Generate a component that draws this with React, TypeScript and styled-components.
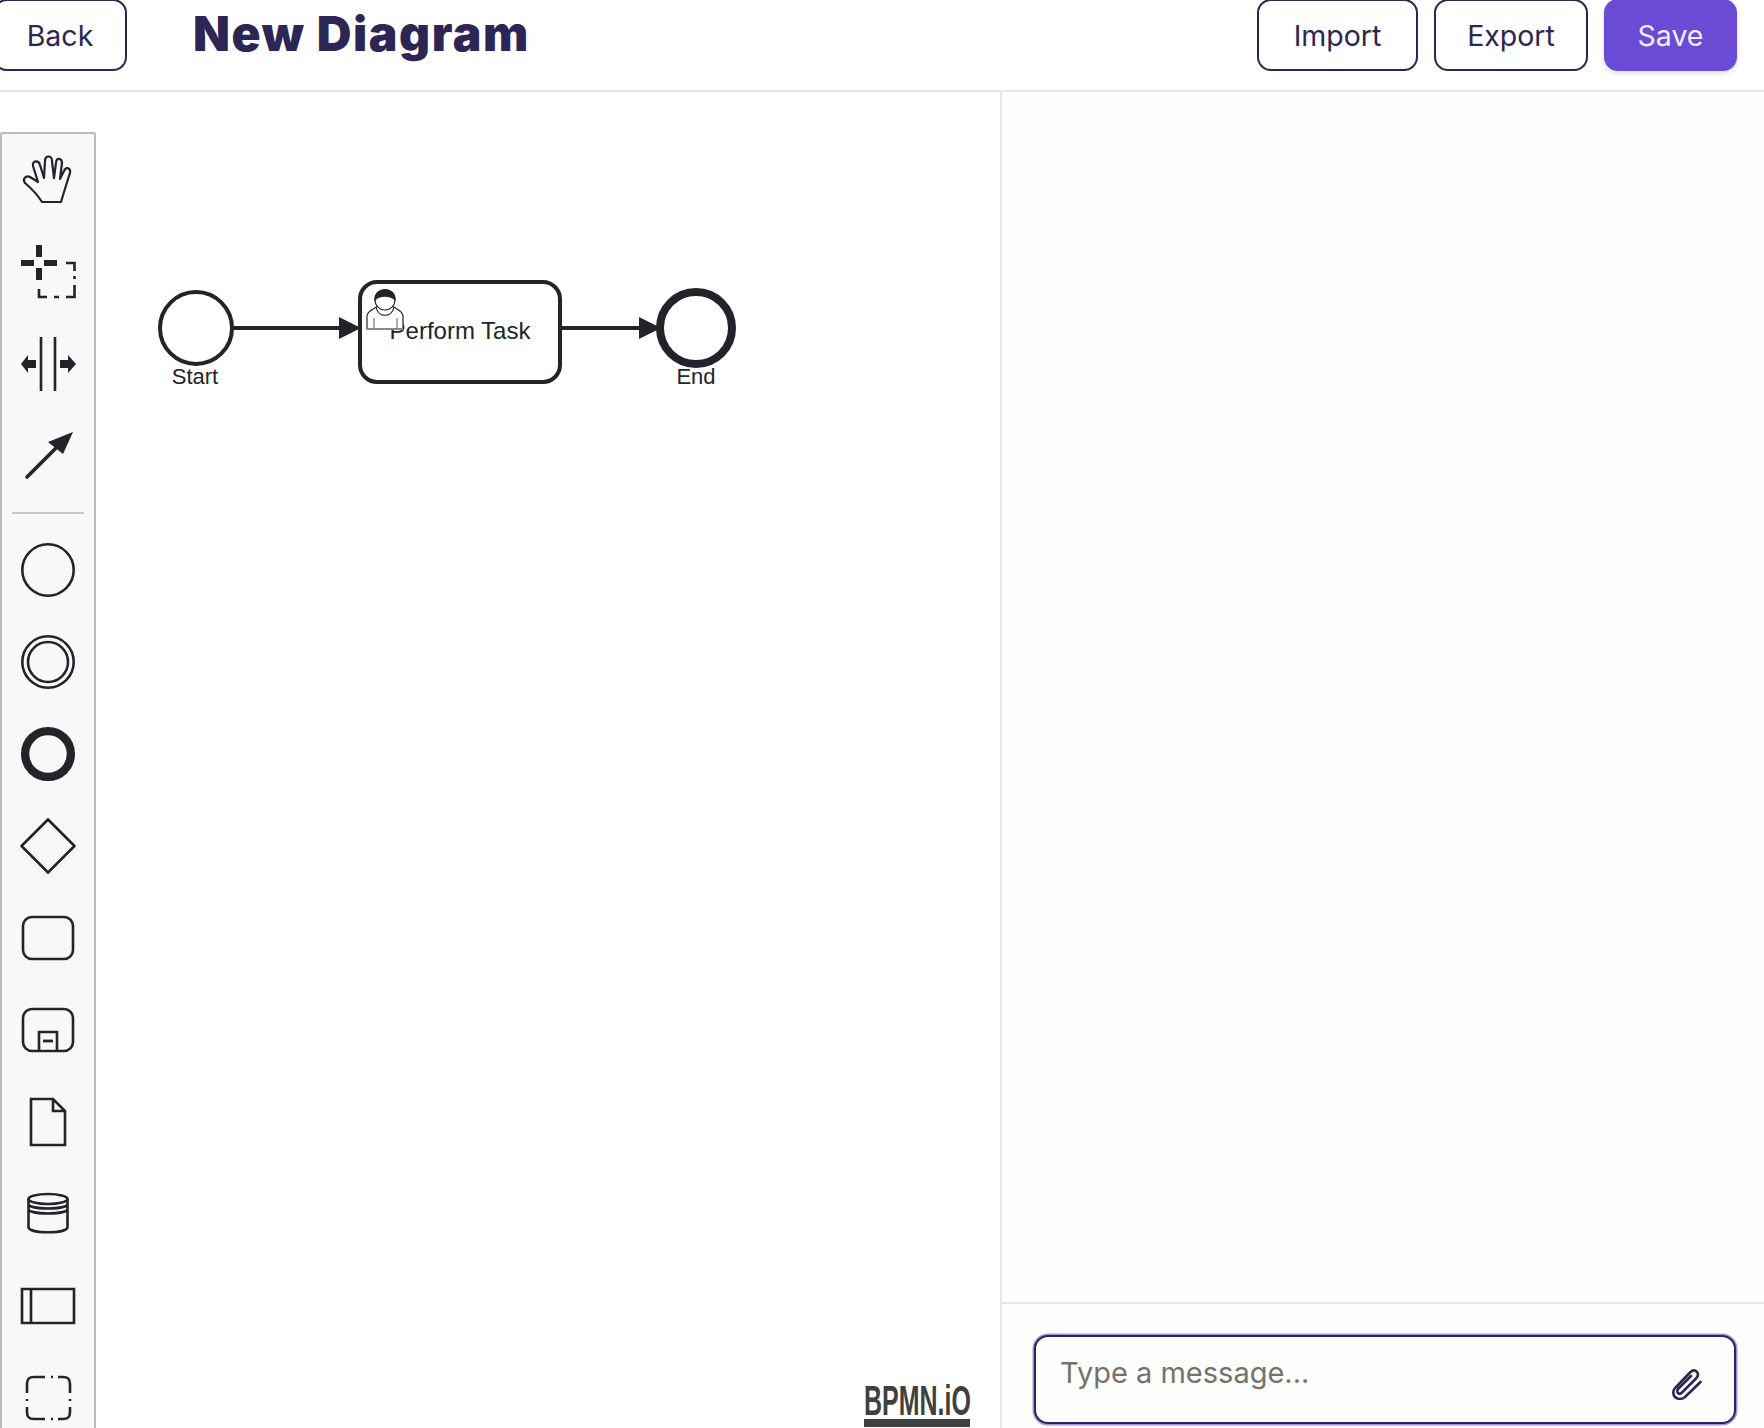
import React from "react";
import styled, { createGlobalStyle } from "styled-components";

const INK = "#22242a";
const NAVY = "#2d2654";

const GlobalStyle = createGlobalStyle`
  html, body {
    margin: 0;
    padding: 0;
    height: 100%;
    overflow: hidden;
    background: #ffffff;
  }
  #root {
    height: 100%;
  }
`;

const Page = styled.div`
  display: flex;
  flex-direction: column;
  width: 1764px;
  height: 1428px;
  overflow: hidden;
  font-family: Inter, "Open Sans", sans-serif;
  color: ${NAVY};
`;

const Header = styled.header`
  display: flex;
  align-items: flex-start;
  justify-content: space-between;
  flex: 0 0 92px;
  box-sizing: border-box;
  padding: 0 27px 0 0;
  border-bottom: 2px solid #e6e6e6;
`;

const HeaderSide = styled.div`
  display: flex;
  align-items: flex-start;
`;

const Button = styled.button<{ $width: number; $primary?: boolean }>`
  width: ${(p) => p.$width}px;
  height: 72px;
  margin-top: -1px;
  box-sizing: border-box;
  border: ${(p) => (p.$primary ? "none" : `2px solid ${NAVY}`)};
  border-radius: 14px;
  background: ${(p) => (p.$primary ? "#6a4bd6" : "#ffffff")};
  color: ${(p) => (p.$primary ? "#f1edff" : NAVY)};
  box-shadow: ${(p) => (p.$primary ? "0 2px 5px rgba(60, 40, 140, 0.18)" : "none")};
  font: 400 28.5px Inter, "Open Sans", sans-serif;
`;

const BackButton = styled(Button)`
  margin-left: -7px;
`;

const ActionButton = styled(Button)`
  margin-left: 16px;
`;

const Title = styled.h1`
  margin: 0 0 0 66px;
  padding-top: 3px;
  font-size: 48px;
  line-height: 62px;
  font-weight: 900;
  letter-spacing: 1.6px;
  color: ${NAVY};
`;

const Body = styled.div`
  display: flex;
  flex: 1;
  min-height: 0;
`;

const Canvas = styled.main`
  position: relative;
  flex: 0 0 1000px;
  overflow: hidden;
  background: #ffffff;
`;

const Palette = styled.nav`
  position: absolute;
  left: 0;
  top: 40px;
  display: flex;
  flex-direction: column;
  width: 96px;
  box-sizing: border-box;
  padding-top: 1px;
  border: 2px solid #b9bcc6;
  border-radius: 2px;
  background: #f8f8f8;
`;

const Tool = styled.div`
  display: flex;
  align-items: center;
  justify-content: center;
  flex: 0 0 92px;
  height: 92px;
`;

const Separator = styled.hr`
  width: 72px;
  margin: 9px auto 10px;
  border: none;
  border-top: 2px solid #c6c8cd;
`;

const DiagramSvg = styled.svg`
  position: absolute;
  left: 140px;
  top: 88px;
`;

const DiagramLabel = styled.text<{ $size: number }>`
  font-family: "Liberation Sans", Arial, sans-serif;
  font-size: ${(p) => p.$size}px;
  fill: ${INK};
  text-anchor: middle;
`;

const Watermark = styled.div`
  position: absolute;
  left: 864px;
  bottom: 1px;
  display: flex;
  flex-direction: column;
  width: 106px;
`;

const WatermarkText = styled.span`
  display: block;
  height: 34px;
  font: 700 42px/34px "Liberation Sans", Arial, sans-serif;
  color: #404040;
  white-space: nowrap;
  transform: scaleX(0.595);
  transform-origin: left center;
`;

const WatermarkBar = styled.span`
  display: block;
  height: 8px;
  margin-top: 1px;
  background: #404040;
`;

const ChatPanel = styled.aside`
  display: flex;
  flex-direction: column;
  flex: 1;
  border-left: 2px solid #e6e6e6;
  background: #fefefc;
`;

const Messages = styled.div`
  flex: 1;
`;

const Composer = styled.div`
  flex: 0 0 126px;
  box-sizing: border-box;
  padding: 31px 28px 0 32px;
  border-top: 2px solid #e6e6e6;
`;

const InputBox = styled.div`
  display: flex;
  justify-content: space-between;
  box-sizing: border-box;
  height: 89px;
  padding: 16px 32px 0 24px;
  border: 2px solid ${NAVY};
  border-radius: 14px;
  box-shadow: 0 0 0 1.5px #a48fe0;
  background: #fefefc;
`;

const Placeholder = styled.span`
  font-size: 29px;
  line-height: 40px;
  color: #75716c;
`;

const ClipSvg = styled.svg`
  margin-top: 15px;
`;

const IconSvg = styled.svg`
  display: block;
`;

const Icon = ({ children }: { children: React.ReactNode }) => (
  <IconSvg
    width="60"
    height="60"
    viewBox="0 0 60 60"
    fill="none"
    stroke={INK}
    strokeWidth="2.6"
    strokeLinejoin="round"
  >
    {children}
  </IconSvg>
);

const tools: React.ReactNode[] = [
  <path
    key="hand"
    strokeWidth="2.2"
    d="M24 51 C19 43 13 37 7 32 C4 28 8 24 12 26 L20 31 L15 15 C14 9 21 9 22 14 L26 27 L27 10 C27 4 34 4 34 10 L36 27 L38 12 C38 6 44 7 44 12 L42 28 L46 20 C48 15 53 17 52 22 C49 31 46 41 43 51 Z"
  />,
  <g key="lasso">
    <path fill={INK} stroke="none" d="M3 17 H16 V23 H3 Z M26 17 H39 V23 H26 Z M18 2 H24 V14 H18 Z M18 25 H24 V37 H18 Z" />
    <path strokeLinejoin="miter" d="M48 20 H56.5 V28 M56.5 33 V36 M56.5 42 V54 H48 M41 54 H36 M29 54 H21 V46" />
  </g>,
  <g key="space">
    <path d="M23 2 V56 M37 2 V56" />
    <path fill={INK} stroke="none" d="M3 29 L10 20 V25 H18 V33 H10 V38 Z M58 29 L50 20 V25 H42 V33 H50 V38 Z" />
  </g>,
  <g key="connect">
    <path strokeWidth="3.6" strokeLinecap="round" d="M9 50 L38 21" />
    <path fill={INK} stroke="none" d="M55 5 L30 15 L45 27 Z" />
  </g>,
];

const shapes: React.ReactNode[] = [
  <circle key="start" cx="30" cy="30" r="25.7" />,
  <g key="intermediate">
    <circle cx="30" cy="30" r="25.7" />
    <circle cx="30" cy="30" r="20" />
  </g>,
  <circle key="end" cx="30" cy="30" r="22.9" strokeWidth="8.3" />,
  <path key="gateway" d="M30 3.5 L56.5 30 L30 56.5 L3.5 30 Z" />,
  <rect key="task" x="5" y="9" width="50" height="42" rx="9" />,
  <g key="subprocess">
    <rect x="5" y="9" width="50" height="42" rx="9" />
    <path strokeLinejoin="miter" d="M21 51 V32 H39 V51" />
    <path strokeWidth="2.8" d="M25 41 H35" />
  </g>,
  <path key="data-object" strokeLinejoin="miter" d="M13 7 H35 L47 19 V53 H13 Z M35 7 V19 H47" />,
  <g key="data-store">
    <ellipse cx="30" cy="15" rx="19.5" ry="5" />
    <path d="M10.5 15 V43 C10.5 50 49.5 50 49.5 43 V15 M10.5 20 C10.5 26 49.5 26 49.5 20 M10.5 25 C10.5 31 49.5 31 49.5 25" />
  </g>,
  <path key="pool" strokeLinejoin="miter" d="M4 13 H56 V47 H4 Z M13 13 V47" />,
  <path
    key="group"
    d="M27 9 H16 C11 9 9 11 9 16 V25 M9 31 V33 M9 39 V44 C9 49 11 51 16 51 H27 M33 51 H35 M40 51 H45 C50 51 52 49 52 44 V39 M52 33 V31 M52 25 V16 C52 11 50 9 45 9 H40 M35 9 H33"
  />,
];

// bpmn-js shapes keep their place on the free canvas
const Diagram = () => (
  <DiagramSvg width="620" height="240" viewBox="0 0 620 240" fill="none" stroke={INK}>
    <circle cx="56" cy="148" r="36" strokeWidth="4" fill="#fff" />
    <path d="M93 148 H202 M420 148 H520" strokeWidth="4" />
    <path d="M199 137 L221 148 L199 159 Z M499 137 L521 148 L499 159 Z" fill={INK} stroke="none" />
    <rect x="220" y="102" width="200" height="100" rx="17" strokeWidth="4" fill="#fff" />
    <circle cx="556" cy="148" r="36" strokeWidth="8" fill="#fff" />
    <DiagramLabel $size={24} x="320" y="159" stroke="none">
      Perform Task
    </DiagramLabel>
    <DiagramLabel $size={22} x="55" y="204" stroke="none">
      Start
    </DiagramLabel>
    <DiagramLabel $size={22} x="556" y="204" stroke="none">
      End
    </DiagramLabel>
    <g strokeWidth="1.2" fill="#fff">
      <path d="M227 149 V136 C227 130 236 129 238 125 H252 C254 129 263 130 263 136 V149 Z" />
      <path d="M236 127 C238 138 252 138 254 127" />
      <circle cx="245" cy="120" r="10" />
      <path d="M235 120 C234 106 256 106 255 120 C251 115 239 115 235 120 Z" fill={INK} />
      <path d="M234 138 V149 M257 138 V149" stroke="#777" />
      <path d="M227 149 H263" stroke="#888" strokeWidth="2" />
    </g>
  </DiagramSvg>
);

const App = () => (
  <Page>
    <GlobalStyle />
    <Header>
      <HeaderSide>
        <BackButton $width={134}>Back</BackButton>
        <Title>New Diagram</Title>
      </HeaderSide>
      <HeaderSide>
        <ActionButton $width={161}>Import</ActionButton>
        <ActionButton $width={154}>Export</ActionButton>
        <ActionButton $width={133} $primary>
          Save
        </ActionButton>
      </HeaderSide>
    </Header>
    <Body>
      <Canvas>
        <Palette>
          {tools.map((t, i) => (
            <Tool key={i}>
              <Icon>{t}</Icon>
            </Tool>
          ))}
          <Separator />
          {shapes.map((s, i) => (
            <Tool key={i}>
              <Icon>{s}</Icon>
            </Tool>
          ))}
        </Palette>
        <Diagram />
        <Watermark>
          <WatermarkText>BPMN.iO</WatermarkText>
          <WatermarkBar />
        </Watermark>
      </Canvas>
      <ChatPanel>
        <Messages />
        <Composer>
          <InputBox>
            <Placeholder>Type a message...</Placeholder>
            <ClipSvg width="30" height="32" viewBox="0 0 30 32" fill="none" stroke={NAVY} strokeWidth="2.6" strokeLinecap="round">
              <path d="M28.5 14 L13 29 C9 32 5 31 3 29 C1 27 0.5 23 3 20 L18 4.5 C20.5 2 23 2 25 4 C26.5 6 26 8.5 24 10.5 L10 24.5 C8.5 26 7 26 6 25 C5 24 5 22 6.5 20.5 L19 8" />
            </ClipSvg>
          </InputBox>
        </Composer>
      </ChatPanel>
    </Body>
  </Page>
);

export default App;
